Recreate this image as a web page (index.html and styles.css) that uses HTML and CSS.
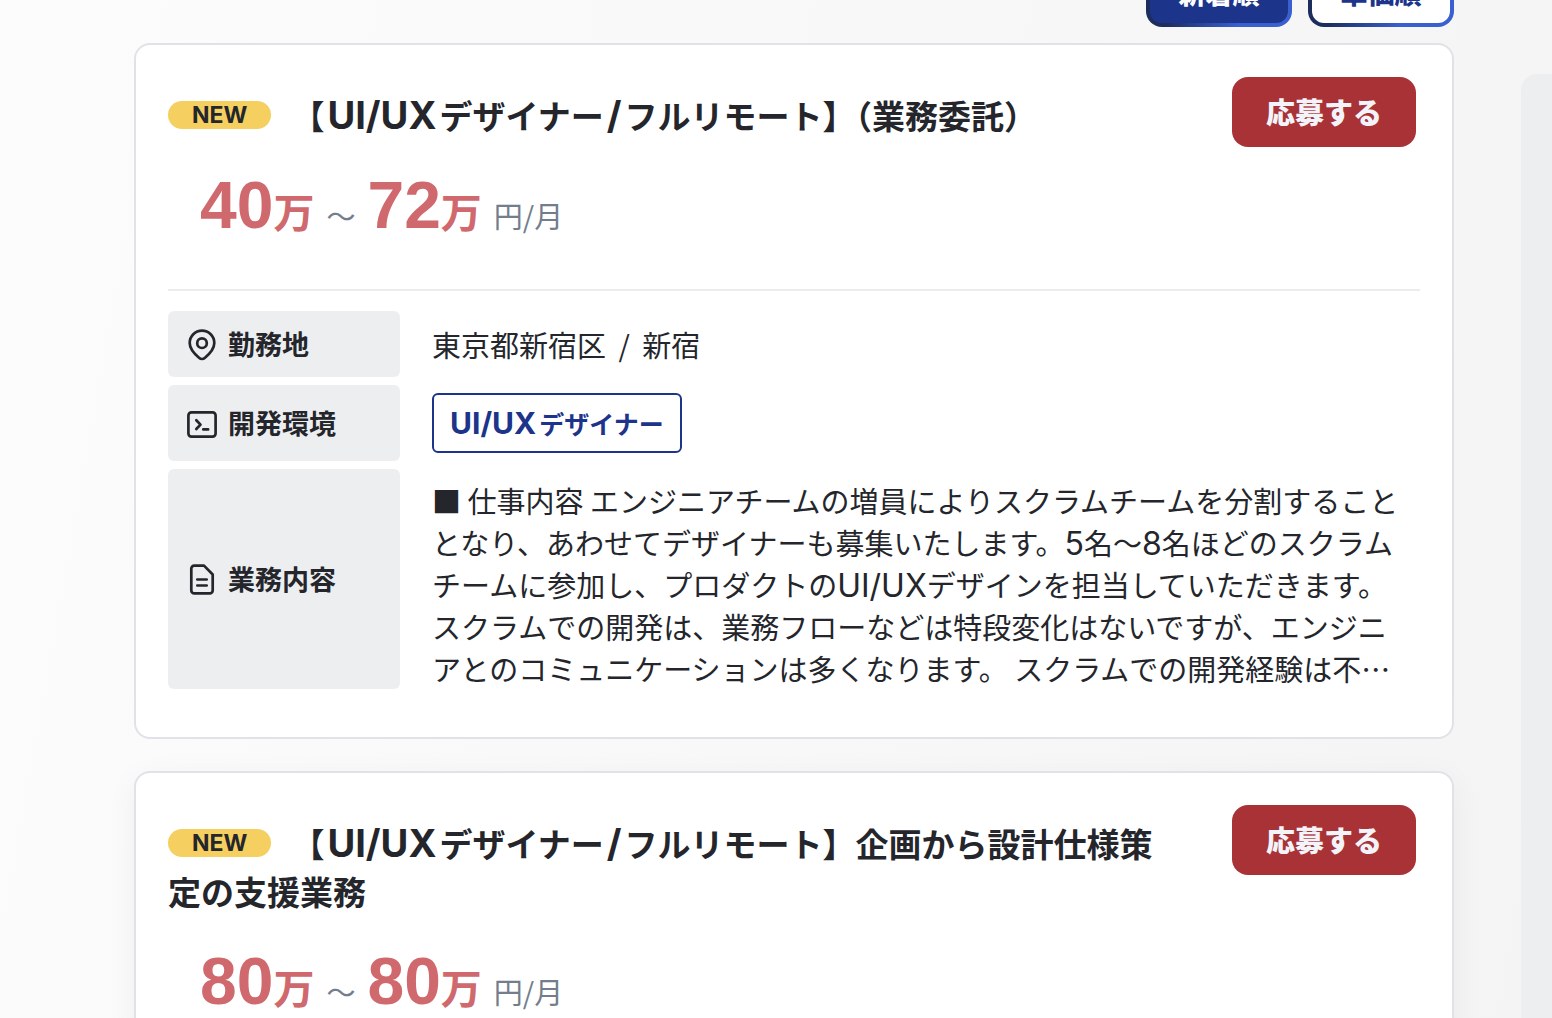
FILE: index.html
```html
<!DOCTYPE html>
<html lang="ja">
<head>
    <meta charset="UTF-8">
    <meta name="viewport" content="width=device-width, initial-scale=1.0">
    <title>案件一覧</title>
    <link rel="stylesheet" href="styles.css">
</head>
<body>
    <div class="page">
        <main class="jobs">
            <div class="sort">
                <button type="button" class="sort-btn active">新着順</button>
                <button type="button" class="sort-btn">単価順</button>
            </div>

            <article class="card">
                <div class="card-head">
                    <div class="summary">
                        <h2 class="title"><span class="badge">NEW</span>【<span class="latin">UI/UX</span>デザイナー<span class="latin">/</span>フルリモート】（業務委託）</h2>
                        <p class="price"><strong>40</strong><b>万</b><span class="tilde">〜</span><strong>72</strong><b>万</b><span class="unit">円/月</span></p>
                    </div>
                    <button type="button" class="apply-btn">応募する</button>
                </div>

                <dl class="details">
                    <dt class="label">
                        <svg class="icon" viewBox="0 0 32 32" aria-hidden="true">
                            <path d="M16 31c-1 0-2-.4-3-1.3C8 25.500 3.700 20.700 3.700 15a12.300 12.300 0 0 1 24.600 0c0 5.700-4.300 10.500-9.300 14.700-1 .9-2 1.300-3 1.300z"/>
                            <circle cx="16" cy="15.200" r="4.800"/>
                        </svg>
                        勤務地
                    </dt>
                    <dd class="value"><span>東京都新宿区 <span class="slash">/</span> 新宿</span></dd>

                    <dt class="label">
                        <svg class="icon" viewBox="0 0 32 32" aria-hidden="true">
                            <rect x="2.400" y="5.400" width="27.200" height="24.200" rx="3"/>
                            <path d="M10.300 13.200l4.200 4.400-4.200 4.400M17.300 22.400h4.800"/>
                        </svg>
                        開発環境
                    </dt>
                    <dd class="value"><a href="#" class="tag"><span class="latin">UI/UX</span>デザイナー</a></dd>

                    <dt class="label">
                        <svg class="icon" viewBox="0 0 32 32" aria-hidden="true">
                            <path d="M8.300 2.600h9.700l8.700 8.900v15.900a3 3 0 0 1-3 3H8.300a3 3 0 0 1-3-3V5.600a3 3 0 0 1 3-3zM11.300 16.500h9.400M11.300 22.500h9.400"/>
                        </svg>
                        業務内容
                    </dt>
                    <dd class="value description"><p>■ 仕事内容 エンジニアチームの増員によりスクラムチームを分割することとなり、あわせてデザイナーも募集いたします。<span class="latin">5</span>名〜<span class="latin">8</span>名ほどのスクラムチームに参加し、プロダクトの<span class="latin">UI/UX</span>デザインを担当していただきます。 スクラムでの開発は、業務フローなどは特段変化はないですが、エンジニアとのコミュニケーションは多くなります。 スクラムでの開発経験は不⋯</p></dd>
                </dl>
            </article>

            <article class="card raised">
                <div class="card-head">
                    <div class="summary">
                        <h2 class="title"><span class="badge">NEW</span>【<span class="latin">UI/UX</span>デザイナー<span class="latin">/</span>フルリモート】企画から設計仕様策定の支援業務</h2>
                        <p class="price"><strong>80</strong><b>万</b><span class="tilde">〜</span><strong>80</strong><b>万</b><span class="unit">円/月</span></p>
                    </div>
                    <button type="button" class="apply-btn">応募する</button>
                </div>
            </article>
        </main>

        <aside class="sidebar"></aside>
    </div>
</body>
</html>
```
FILE: styles.css
```css
* {
    margin: 0;
    padding: 0;
    box-sizing: border-box;
}

body {
    height: 100vh;
    overflow: hidden;
    background: linear-gradient(100deg, #fcfcfc, #f4f4f4);
    color: #24262c;
    font-family: 'Noto Sans CJK JP', sans-serif;
    font-size: 29px;
    line-height: 42px;
}

button {
    border: none;
    font-family: inherit;
    cursor: pointer;
}

.page {
    display: grid;
    grid-template-columns: 1fr 31px;
    gap: 67px;
    height: 100vh;
    padding-left: 134px;
    overflow: hidden;
}

/* the list is scrolled, so the sort row is cut by the top edge */
.jobs {
    min-width: 0;
    margin-top: -37px;
}

.sort {
    display: flex;
    justify-content: flex-end;
    gap: 16px;
    margin-bottom: 16px;
}

.sort-btn {
    width: 146px;
    height: 64px;
    padding-bottom: 6px;
    border: 4px solid transparent;
    border-radius: 16px;
    background: linear-gradient(#fff, #fff) padding-box, linear-gradient(120deg, #1c2d5e 30%, #3a5fd0 70%) border-box;
    color: #1c348a;
    font-size: 27px;
    font-weight: 900;
}

.sort-btn.active {
    background: linear-gradient(#1c348a, #1c348a) padding-box, linear-gradient(120deg, #1c2d5e 30%, #3a5fd0 70%) border-box;
    color: #fff;
}

.card {
    margin-bottom: 32px;
    padding: 32px 32px 48px;
    background: #fff;
    border: 2px solid #e1e2e7;
    border-radius: 16px;
}

.card.raised {
    box-shadow: 0 8px 32px rgba(0, 0, 0, 0.05);
}

.card-head {
    display: flex;
    align-items: flex-start;
    margin-bottom: 20px;
    padding-right: 4px;
    border-bottom: 2px solid #ebecee;
}

.summary {
    flex: 1;
    padding: 14px 64px 26px 0;
}

.title {
    font-size: 33px;
    line-height: 48px;
}

.latin {
    font-family: Inter, sans-serif;
    font-size: 32px;
    line-height: 1;
}

.title .latin {
    margin: 0 3px;
    font-size: 38px;
}

.badge {
    display: inline-block;
    margin-right: 20px;
    padding: 0 24px;
    border-radius: 14px;
    background: #f5d060;
    font-family: Inter, sans-serif;
    font-size: 23px;
    line-height: 28px;
    vertical-align: 6px;
}

.price {
    margin-top: 28px;
    padding-left: 32px;
    line-height: 96px;
    color: #d0696e;
}

.price strong {
    font-family: 'Liberation Sans', sans-serif;
    font-size: 66px;
    line-height: 1;
}

.price b {
    font-size: 41px;
    line-height: 1;
}

.price .tilde,
.price .unit {
    color: #737d8c;
    font-size: 29px;
    line-height: 1;
}

.price .tilde {
    margin: 0 12px;
}

.price .unit {
    margin-left: 12px;
}

.apply-btn {
    width: 184px;
    height: 70px;
    padding-bottom: 2px;
    border-radius: 16px;
    background: #a83236;
    color: #f2f4fa;
    font-size: 29px;
    font-weight: 900;
}

.details {
    display: grid;
    grid-template-columns: 232px 1fr;
    gap: 8px 32px;
}

.label {
    display: flex;
    align-items: center;
    gap: 10px;
    padding: 12px 18px;
    border-radius: 6px;
    background: #edeef0;
    font-size: 27px;
    font-weight: 700;
}

.icon {
    width: 32px;
    height: 32px;
    overflow: visible;
    fill: none;
    stroke: currentColor;
    stroke-width: 2.7;
    stroke-linecap: round;
    stroke-linejoin: round;
}

.value {
    display: flex;
    align-items: center;
    padding: 8px 0;
}

.value:first-of-type {
    padding: 12px 0;
}

.slash {
    margin: 0 6px;
}

.tag {
    display: block;
    height: 60px;
    padding: 0 16px;
    border: 2px solid #1c348a;
    border-radius: 6px;
    color: #1c348a;
    font-size: 25px;
    font-weight: 700;
    line-height: 56px;
    text-decoration: none;
}

.tag .latin {
    margin-right: 3px;
    font-size: 30px;
}

.description {
    padding: 10px 12px 0 0;
}

.sidebar {
    margin-top: 74px;
    border-top-left-radius: 16px;
    background: #edeef0;
}
```
